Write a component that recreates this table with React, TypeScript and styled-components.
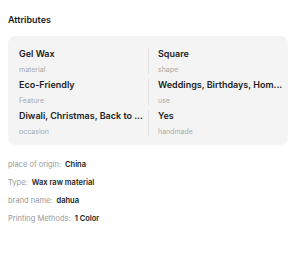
import styled, { createGlobalStyle } from 'styled-components';

interface Attribute {
  value: string;
  name: string;
}

interface Detail {
  label: string;
  value: string;
}

const attributes: Attribute[] = [
  { value: "Gel Wax", name: "material" },
  { value: "Square", name: "shape" },
  { value: "Eco-Friendly", name: "Feature" },
  { value: "Weddings, Birthdays, Hom...", name: "use" },
  { value: "Diwali, Christmas, Back to ...", name: "occasion" },
  { value: "Yes", name: "handmade" },
];

const details: Detail[] = [
  { label: "place of origin:", value: "China" },
  { label: "Type:", value: "Wax raw material" },
  { label: "brand name:", value: "dahua" },
  { label: "Printing Methods:", value: "1 Color" },
];

const GlobalStyle = createGlobalStyle`
  body {
    margin: 0;
    background: #ffffff;
    font-family: Inter, "Noto Sans", "Liberation Sans", sans-serif;
  }
`;

const App = () => {
  return (
    <>
      <GlobalStyle />
      <Page>
        <Title>Attributes</Title>
        <Card>
          {attributes.map((attr, i) => (
            <Cell key={attr.name} $right={i % 2 === 1}>
              <Value>{attr.value}</Value>
              <Name>{attr.name}</Name>
            </Cell>
          ))}
        </Card>
        <DetailList>
          {details.map(d => (
            <DetailRow key={d.label}>
              <DetailLabel>{d.label}</DetailLabel>
              <DetailValue>{d.value}</DetailValue>
            </DetailRow>
          ))}
        </DetailList>
      </Page>
    </>
  );
}

const Page = styled.div`
  padding: 14px 12px 0 8px;
`;

const Title = styled.div`
  font-size: 9px;
  line-height: 12px;
  font-weight: 600;
  color: #222;
  margin-bottom: 10px;
`;

const Card = styled.div`
  background: #f4f4f4;
  border-radius: 8px;
  padding: 12px 10px 9px 11px;
  display: grid;
  grid-template-columns: 129px 1fr;
  row-gap: 5px;
`;

const Cell = styled.div<{ $right: boolean }>`
  min-width: 0;
  padding-left: ${p => (p.$right ? "9px" : "0")};
  border-left: ${p => (p.$right ? "1px solid #e2e2e2" : "none")};
`;

const Value = styled.div`
  font-size: 9px;
  line-height: 12px;
  font-weight: 600;
  color: #222;
  white-space: nowrap;
`;

const Name = styled.div`
  margin-top: 5px;
  font-size: 7px;
  line-height: 9px;
  color: #aaa;
`;

const DetailList = styled.div`
  margin-top: 14px;
  display: flex;
  flex-direction: column;
  gap: 6px;
`;

const DetailRow = styled.div`
  display: flex;
  gap: 4px;
  font-size: 7.5px;
  line-height: 12px;
`;

const DetailLabel = styled.span`
  color: #999;
`;

const DetailValue = styled.span`
  color: #222;
  font-weight: 600;
`;

export default App;
